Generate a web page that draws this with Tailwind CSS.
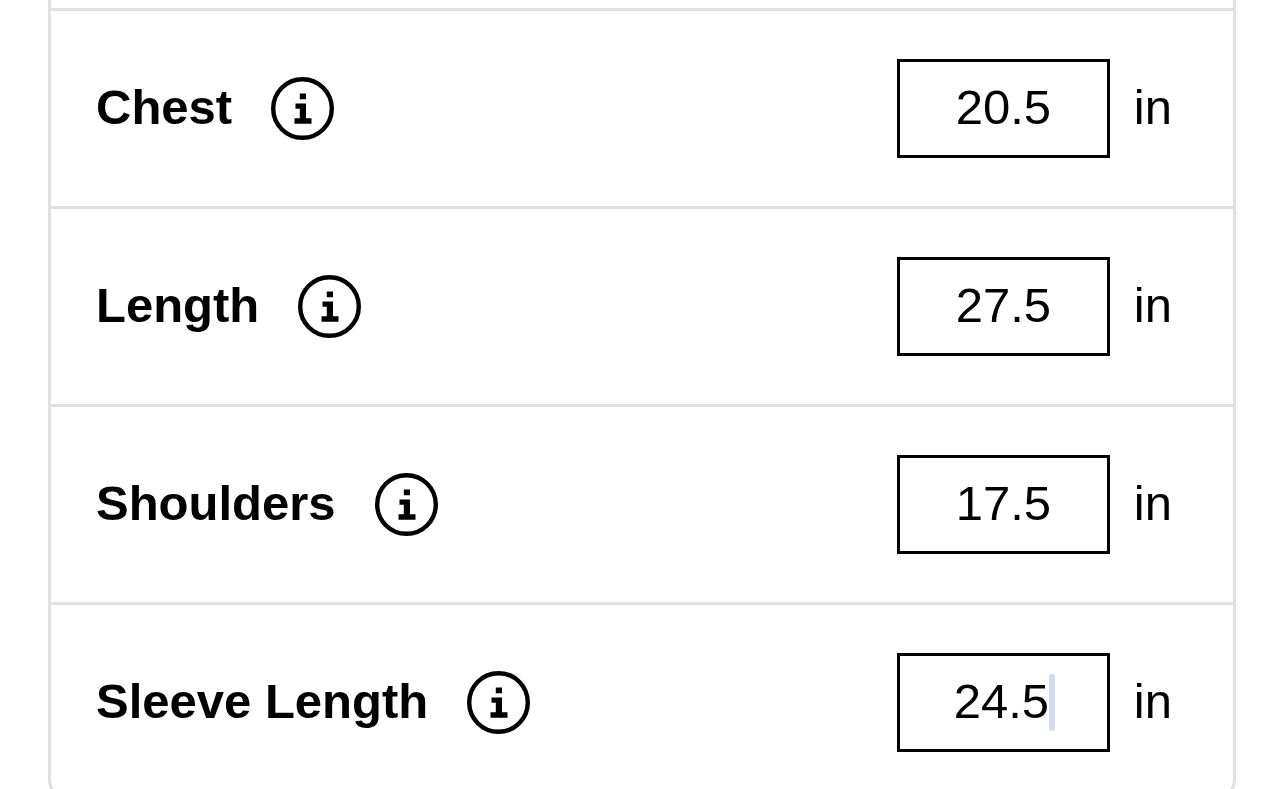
<!doctype html>
<html lang="en">
  <head>
    <meta charset="UTF-8">
    <meta name="viewport" content="width=device-width, initial-scale=1.0">
    <title>Measurements</title>
    <script src="https://cdn.jsdelivr.net/npm/@tailwindcss/browser@4"></script>
  </head>
  <body class="h-screen overflow-hidden bg-white text-black font-['Liberation_Sans',Arial,sans-serif]">
    <svg class="hidden">
      <symbol id="info" viewBox="0 0 63 63">
        <circle cx="31.5" cy="31.5" r="29.3" fill="none" stroke="currentColor" stroke-width="4.4" />
        <path fill="currentColor" d="M28.8 16.4h6.2V22.2h-6.2zM24.5 26.5H35v14.7h5.5v5.6h-17v-5.6h5.3v-9.4h-4.3z" />
      </symbol>
    </svg>

    <form class="mx-12 pt-2 border-3 border-t-0 border-[#e0e0e0] rounded-b-3xl">
      <div class="flex items-center justify-between py-12 pl-[45px] pr-[61px] border-t-3 border-[#e0e0e0]">
        <div class="flex items-center gap-[39px]">
          <label for="chest" class="pb-1 text-[49px] leading-14 font-bold">Chest</label>
          <button type="button" aria-label="About chest">
            <svg class="block size-[63px]"><use href="#info" /></svg>
          </button>
        </div>
        <div class="flex items-center gap-6">
          <input id="chest" type="text" inputmode="decimal" value="20.5" class="w-[213px] h-[99px] pb-1 border-3 border-black text-center text-[49px] outline-none">
          <span class="pb-1 text-[49px] leading-14">in</span>
        </div>
      </div>

      <div class="flex items-center justify-between py-12 pl-[45px] pr-[61px] border-t-3 border-[#e0e0e0]">
        <div class="flex items-center gap-[39px]">
          <label for="length" class="pb-1 text-[49px] leading-14 font-bold">Length</label>
          <button type="button" aria-label="About length">
            <svg class="block size-[63px]"><use href="#info" /></svg>
          </button>
        </div>
        <div class="flex items-center gap-6">
          <input id="length" type="text" inputmode="decimal" value="27.5" class="w-[213px] h-[99px] pb-1 border-3 border-black text-center text-[49px] outline-none">
          <span class="pb-1 text-[49px] leading-14">in</span>
        </div>
      </div>

      <div class="flex items-center justify-between py-12 pl-[45px] pr-[61px] border-t-3 border-[#e0e0e0]">
        <div class="flex items-center gap-[39px]">
          <label for="shoulders" class="pb-1 text-[49px] leading-14 font-bold">Shoulders</label>
          <button type="button" aria-label="About shoulders">
            <svg class="block size-[63px]"><use href="#info" /></svg>
          </button>
        </div>
        <div class="flex items-center gap-6">
          <input id="shoulders" type="text" inputmode="decimal" value="17.5" class="w-[213px] h-[99px] pb-1 border-3 border-black text-center text-[49px] outline-none">
          <span class="pb-1 text-[49px] leading-14">in</span>
        </div>
      </div>

      <div class="flex items-center justify-between py-12 pl-[45px] pr-[61px] border-t-3 border-[#e0e0e0]">
        <div class="flex items-center gap-[39px]">
          <label for="sleeve" class="pb-1 text-[49px] leading-14 font-bold">Sleeve Length</label>
          <button type="button" aria-label="About sleeve length">
            <svg class="block size-[63px]"><use href="#info" /></svg>
          </button>
        </div>
        <div class="flex items-center gap-6">
          <div class="relative">
            <input id="sleeve" type="text" inputmode="decimal" value="24.5" class="block w-[213px] h-[99px] pb-1 pr-1 border-3 border-black text-center text-[49px] outline-none">
            <!-- caret -->
            <span class="absolute left-[152px] top-[21px] w-1.5 h-[57px] rounded-full bg-[#d2daf6]"></span>
          </div>
          <span class="pb-1 text-[49px] leading-14">in</span>
        </div>
      </div>
    </form>
  </body>
</html>
